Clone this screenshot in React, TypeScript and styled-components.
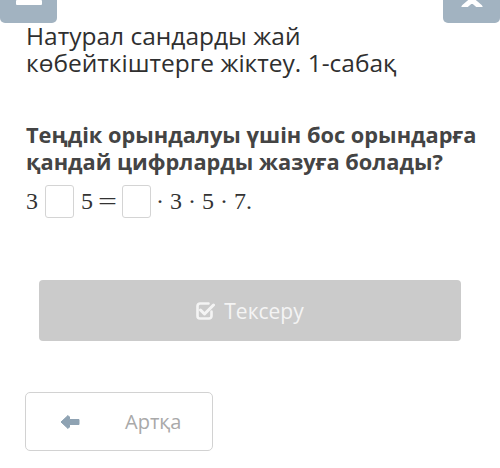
import React from "react";
import styled, { createGlobalStyle } from "styled-components";

const GlobalStyle = createGlobalStyle`
  html, body {
    margin: 0;
    padding: 0;
    background: #fff;
    font-family: "Open Sans", "Noto Sans", sans-serif;
  }
`;

const Page = styled.div`
  width: 500px;
  height: 468px;
  overflow: hidden;
  display: flex;
  flex-direction: column;
`;

const TopBar = styled.div`
  display: flex;
  justify-content: space-between;
  height: 23px;
`;

const CornerButton = styled.div`
  width: 57px;
  height: 23px;
  background: #a2b3c1;
  border-radius: 0 0 5px 5px;
  display: flex;
  justify-content: center;
  align-items: flex-start;
`;

const Title = styled.h1`
  margin: -1px 0 0 26px;
  font-size: 24.5px;
  line-height: 27px;
  font-weight: 400;
  color: #2f2f2f;
`;

const Question = styled.h2`
  margin: 45px 0 0 26px;
  font-size: 21.8px;
  line-height: 27px;
  font-weight: 700;
  color: #444;
`;

const MathRow = styled.div`
  margin: 10px 0 0 26px;
  display: flex;
  align-items: center;
  height: 33px;
  font-family: "Liberation Serif", "DejaVu Serif", serif;
  font-size: 24px;
  color: #333;
`;

const Blank = styled.span<{ $left: number; $right: number }>`
  display: inline-block;
  width: 27px;
  height: 31px;
  border: 1px solid #d4d4d4;
  border-radius: 3px;
  margin: 0 ${(p) => p.$right}px 0 ${(p) => p.$left}px;
`;

const Equals = styled.span`
  display: inline-block;
  margin: 0 9px 0 5px;
  transform: scaleX(1.4);
  transform-origin: left center;
  width: 15px;
`;

const CheckButton = styled.div`
  margin: 62px 39px 0;
  height: 61px;
  border-radius: 4px;
  background: #cbcbcb;
  display: flex;
  align-items: center;
  justify-content: center;
  gap: 9px;
  color: #f4f4f4;
  font-size: 21px;
`;

const BackButton = styled.div`
  margin: 51px 0 0 25px;
  height: 57px;
  width: 152px;
  padding-left: 34px;
  border: 1px solid #d2d2d2;
  border-radius: 5px;
  display: flex;
  align-items: center;
  color: #a9a9a9;
  font-size: 20px;
`;

const BackLabel = styled.span`
  margin-left: 45px;
`;

const MinusIcon = () => (
  <svg width="26" height="6" viewBox="0 0 26 6">
    <rect x="0" y="0" width="26" height="5" rx="1" fill="#fff" />
  </svg>
);

const CloseIcon = () => (
  <svg width="22" height="7" viewBox="0 8 22 7">
    <path d="M3 1 L19 15 M19 1 L3 15" stroke="#fff" strokeWidth="5" strokeLinecap="round" />
  </svg>
);

const CheckSquareIcon = () => (
  <svg width="19" height="18" viewBox="0 0 19 18">
    <path
      d="M12.5 1.5 H4 A2.5 2.5 0 0 0 1.5 4 V14 A2.5 2.5 0 0 0 4 16.5 H13 A2.5 2.5 0 0 0 15.5 14 V9.5"
      fill="none"
      stroke="#f4f4f4"
      strokeWidth="2.6"
      strokeLinecap="round"
    />
    <path
      d="M4.5 8 L8.5 12 L17.5 3"
      fill="none"
      stroke="#f4f4f4"
      strokeWidth="3"
      strokeLinecap="round"
      strokeLinejoin="round"
    />
  </svg>
);

const ArrowLeftIcon = () => (
  <svg width="20" height="14" viewBox="0 0 20 14">
    <path
      d="M1 7 L8 0.5 L9.5 2 V4.5 H19 V9.5 H9.5 V12 L8 13.5 Z"
      fill="#8fa3b3"
      stroke="#8fa3b3"
      strokeWidth="1"
      strokeLinejoin="round"
    />
  </svg>
);

export default function App() {
  return (
    <>
      <GlobalStyle />
      <Page>
        <TopBar>
          <CornerButton>
            <MinusIcon />
          </CornerButton>
          <CornerButton>
            <CloseIcon />
          </CornerButton>
        </TopBar>
        <Title>
          Натурал сандарды жай
          <br />
          көбейткіштерге жіктеу. 1-сабақ
        </Title>
        <Question>
          Теңдік орындалуы үшін бос орындарға
          <br />
          қандай цифрларды жазуға болады?
        </Question>
        <MathRow>
          <span>3</span>
          <Blank $left={7} $right={7} />
          <span>5</span>
          <Equals>=</Equals>
          <Blank $left={0} $right={5} />
          <span>· 3 · 5 · 7.</span>
        </MathRow>
        <CheckButton>
          <CheckSquareIcon />
          <span>Тексеру</span>
        </CheckButton>
        <BackButton>
          <ArrowLeftIcon />
          <BackLabel>Артқа</BackLabel>
        </BackButton>
      </Page>
    </>
  );
}
